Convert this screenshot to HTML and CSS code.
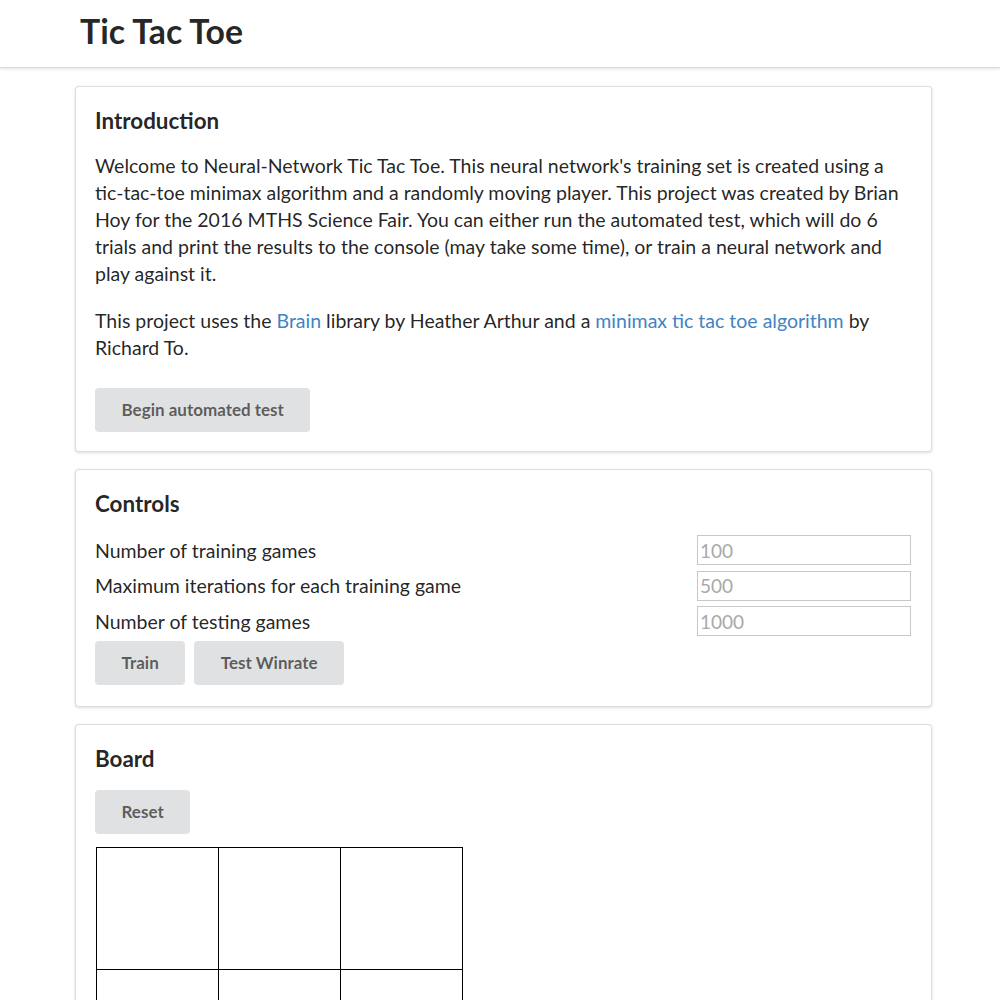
FILE: index.html
```html
<!DOCTYPE html>
<html>
<head>
<meta charset="utf-8">
<link rel="stylesheet" href="styles.css">
</head>
<body>
<div class="topbar"><h1 class="title">Tic Tac Toe</h1></div>
<main class="main">
  <section class="card">
    <h2 class="card-header">Introduction</h2>
    <p class="para">Welcome to Neural-Network Tic Tac Toe. This neural network's training set is created using a tic-tac-toe minimax algorithm and a randomly moving player. This project was created by Brian Hoy for the 2016 MTHS Science Fair. You can either run the automated test, which will do 6 trials and print the results to the console (may take some time), or train a neural network and play against it.</p>
    <p class="para">This project uses the <a class="link" href="#">Brain</a> library by Heather Arthur and a <a class="link" href="#">minimax tic tac toe algorithm</a> by<br>Richard To.</p>
    <div class="btn-row intro-btns"><button class="btn">Begin automated test</button></div>
  </section>
  <section class="card card-controls">
    <h2 class="card-header">Controls</h2>
    <div class="controls">
      <div class="control-row"><span class="label">Number of training games</span><input class="input" placeholder="100"></div>
      <div class="control-row"><span class="label">Maximum iterations for each training game</span><input class="input" placeholder="500"></div>
      <div class="control-row"><span class="label">Number of testing games</span><input class="input" placeholder="1000"></div>
    </div>
    <div class="btn-row ctrl-btns"><button class="btn">Train</button><button class="btn">Test Winrate</button></div>
  </section>
  <section class="card">
    <h2 class="card-header">Board</h2>
    <div class="btn-row board-btns"><button class="btn">Reset</button></div>
    <table class="board">
      <tr><td></td><td></td><td></td></tr>
      <tr><td></td><td></td><td></td></tr>
      <tr><td></td><td></td><td></td></tr>
    </table>
  </section>
</main>
</body>
</html>
```
FILE: styles.css
```css
* { box-sizing: border-box; }
body {
  margin: 0;
  font-family: Lato, "Open Sans", sans-serif;
  font-size: 19.5px;
  line-height: 27px;
  color: rgba(0,0,0,0.87);
  background: #fff;
}
.topbar {
  height: 68px;
  padding-left: 80px;
  display: flex;
  align-items: center;
  border-bottom: 1px solid #dcdcdc;
  box-shadow: 0 1px 3px rgba(0,0,0,0.12);
}
.title {
  margin: 0 0 6px 0;
  font-size: 33.8px;
  font-weight: 700;
  line-height: 40px;
}
.main {
  padding: 18px 0 0 75px;
  width: 932px;
}
.card {
  border: 1px solid rgba(34,36,38,0.15);
  border-radius: 4px;
  box-shadow: 0 1px 3px rgba(34,36,38,0.15);
  padding: 20px 20px 19px 19px;
  margin-bottom: 17px;
  background: #fff;
}
.card-controls { padding-bottom: 21px; }
.card-header {
  margin: 0;
  font-size: 22.4px;
  font-weight: 700;
  line-height: 28px;
}
.para {
  margin: 17px 0 0 0;
}
.para + .para { margin-top: 20px; }
.link { color: #4183c4; text-decoration: none; }
.btn-row { display: flex; gap: 9px; }
.intro-btns { margin-top: 27px; }
.btn {
  font-family: Lato, "Open Sans", sans-serif;
  font-size: 17px;
  font-weight: 700;
  line-height: 20px;
  padding: 12px 26.5px;
  border: none;
  border-radius: 4px;
  background: #e0e1e2;
  color: rgba(0,0,0,0.6);
}
.controls {
  margin-top: 17px;
  display: flex;
  flex-direction: column;
  gap: 5.5px;
}
.control-row {
  display: flex;
  justify-content: space-between;
  align-items: center;
  height: 30px;
}
.input {
  width: 214px;
  height: 30px;
  border: 1px solid #c8c8c8;
  padding: 0 2px;
  font-family: Lato, "Open Sans", sans-serif;
  font-size: 19px;
  color: #333;
}
.input::placeholder { color: #a9a9a9; }
.ctrl-btns { margin-top: 5px; }
.board-btns { margin-top: 17px; }
.board {
  margin-top: 13px;
  margin-left: 1px;
  border-collapse: collapse;
}
.board td {
  border: 1.5px solid #000;
  width: 122px;
  height: 122px;
  padding: 0;
}
```
